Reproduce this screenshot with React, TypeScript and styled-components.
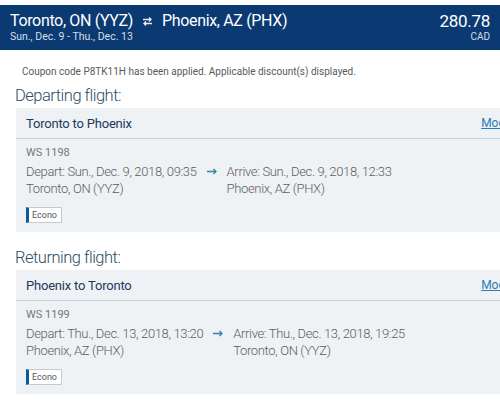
import React from 'react';
import styled, { createGlobalStyle } from 'styled-components';

const GlobalStyle = createGlobalStyle`
  html, body {
    margin: 0;
    padding: 0;
    background: #ffffff;
    overflow: hidden;
  }
  body {
    font-family: Roboto, 'Liberation Sans', sans-serif;
  }
`;

const Page = styled.div`
  width: 500px;
  padding-top: 5px;
`;

const Header = styled.header`
  height: 45px;
  background: #0b3a72;
  color: #ffffff;
  display: flex;
  justify-content: space-between;
  padding: 6px 10px 0;
  box-sizing: border-box;
`;

const Route = styled.div`
  display: flex;
  flex-direction: column;
`;

const RouteTitle = styled.div`
  display: flex;
  align-items: center;
  gap: 9px;
  font-size: 16px;
  line-height: 20px;
  letter-spacing: -0.35px;
`;

const RouteDates = styled.div`
  font-size: 10.5px;
  line-height: 12px;
  color: #d5deea;
`;

const Price = styled.div`
  display: flex;
  flex-direction: column;
  align-items: flex-end;
`;

const Amount = styled.div`
  font-size: 17px;
  line-height: 20px;
  letter-spacing: -0.3px;
`;

const Currency = styled.div`
  font-size: 10px;
  line-height: 12px;
  color: #d5deea;
`;

const Coupon = styled.p`
  margin: 15px 0 0 22px;
  font-size: 10px;
  line-height: 14px;
  color: #5a5a5a;
`;

const SectionTitle = styled.h2<{ $top: number }>`
  margin: ${({ $top }) => $top}px 0 1px 15px;
  font-size: 16.5px;
  line-height: 22px;
  font-weight: 300;
  letter-spacing: -0.5px;
  color: #2e4d63;
`;

const Card = styled.section`
  margin-left: 16px;
  width: 512px;
  background: #eef2f4;
`;

const CardHeader = styled.div`
  height: 30px;
  display: flex;
  align-items: center;
  justify-content: space-between;
  padding: 0 10px;
  border-bottom: 1px solid #c8d0d5;
`;

const CardTitle = styled.div`
  font-size: 13px;
  font-weight: 400;
  letter-spacing: -0.2px;
  color: #1c3a5c;
`;

const ModifyLink = styled.a`
  font-size: 12px;
  color: #2a7cb4;
  text-decoration: underline;
`;

const CardBody = styled.div`
  padding: 7px 10px 9px;
`;

const FlightNo = styled.div`
  font-size: 11px;
  line-height: 14px;
  color: #777777;
`;

const Legs = styled.div`
  display: flex;
  align-items: flex-start;
  gap: 10px;
  margin-top: 3px;
`;

const Leg = styled.div`
  display: flex;
  flex-direction: column;
  font-size: 13px;
  line-height: 17px;
  font-weight: 300;
  letter-spacing: -0.35px;
  color: #5e5e5e;
`;

const ArrowWrap = styled.div`
  height: 17px;
  display: flex;
  align-items: center;
`;

const Fare = styled.span`
  display: inline-block;
  margin-top: 10px;
  height: 16px;
  line-height: 14px;
  box-sizing: border-box;
  padding: 0 4px 0 3px;
  background: #ffffff;
  border: 1px solid #c9c9c9;
  border-left: 3px solid #0e5a9a;
  font-size: 9px;
  color: #555555;
`;

const SwapIcon = () => (
  <svg width="11" height="11" viewBox="0 0 11 11" fill="none" stroke="#e6ecf4" strokeWidth="1.4">
    <path d="M1 3.5h8M7 1.5l2 2-2 2" />
    <path d="M10 7.5H2M4 5.5l-2 2 2 2" />
  </svg>
);

const Arrow = () => (
  <svg width="10" height="7" viewBox="0 0 10 7" fill="none" stroke="#2a86a8" strokeWidth="1.3">
    <path d="M0 3.5h9M6.5 1l2.5 2.5L6.5 6" />
  </svg>
);

type Flight = {
  heading: string;
  title: string;
  number: string;
  depart: string;
  from: string;
  arrive: string;
  to: string;
};

const flights: Flight[] = [
  {
    heading: 'Departing flight:',
    title: 'Toronto to Phoenix',
    number: 'WS 1198',
    depart: 'Depart: Sun., Dec. 9, 2018, 09:35',
    from: 'Toronto, ON (YYZ)',
    arrive: 'Arrive: Sun., Dec. 9, 2018, 12:33',
    to: 'Phoenix, AZ (PHX)',
  },
  {
    heading: 'Returning flight:',
    title: 'Phoenix to Toronto',
    number: 'WS 1199',
    depart: 'Depart: Thu., Dec. 13, 2018, 13:20',
    from: 'Phoenix, AZ (PHX)',
    arrive: 'Arrive: Thu., Dec. 13, 2018, 19:25',
    to: 'Toronto, ON (YYZ)',
  },
];

export default function App() {
  return (
    <Page>
      <GlobalStyle />
      <Header>
        <Route>
          <RouteTitle>
            <span>Toronto, ON (YYZ)</span>
            <SwapIcon />
            <span>Phoenix, AZ (PHX)</span>
          </RouteTitle>
          <RouteDates>Sun., Dec. 9 - Thu., Dec. 13</RouteDates>
        </Route>
        <Price>
          <Amount>280.78</Amount>
          <Currency>CAD</Currency>
        </Price>
      </Header>

      <Coupon>Coupon code P8TK11H has been applied. Applicable discount(s) displayed.</Coupon>

      {flights.map((f, i) => (
        <React.Fragment key={f.number}>
          <SectionTitle $top={i === 0 ? 6 : 15}>{f.heading}</SectionTitle>
          <Card>
            <CardHeader>
              <CardTitle>{f.title}</CardTitle>
              <ModifyLink href="#">Modify</ModifyLink>
            </CardHeader>
            <CardBody>
              <FlightNo>{f.number}</FlightNo>
              <Legs>
                <Leg>
                  <span>{f.depart}</span>
                  <span>{f.from}</span>
                </Leg>
                <ArrowWrap>
                  <Arrow />
                </ArrowWrap>
                <Leg>
                  <span>{f.arrive}</span>
                  <span>{f.to}</span>
                </Leg>
              </Legs>
              <Fare>Econo</Fare>
            </CardBody>
          </Card>
        </React.Fragment>
      ))}
    </Page>
  );
}
